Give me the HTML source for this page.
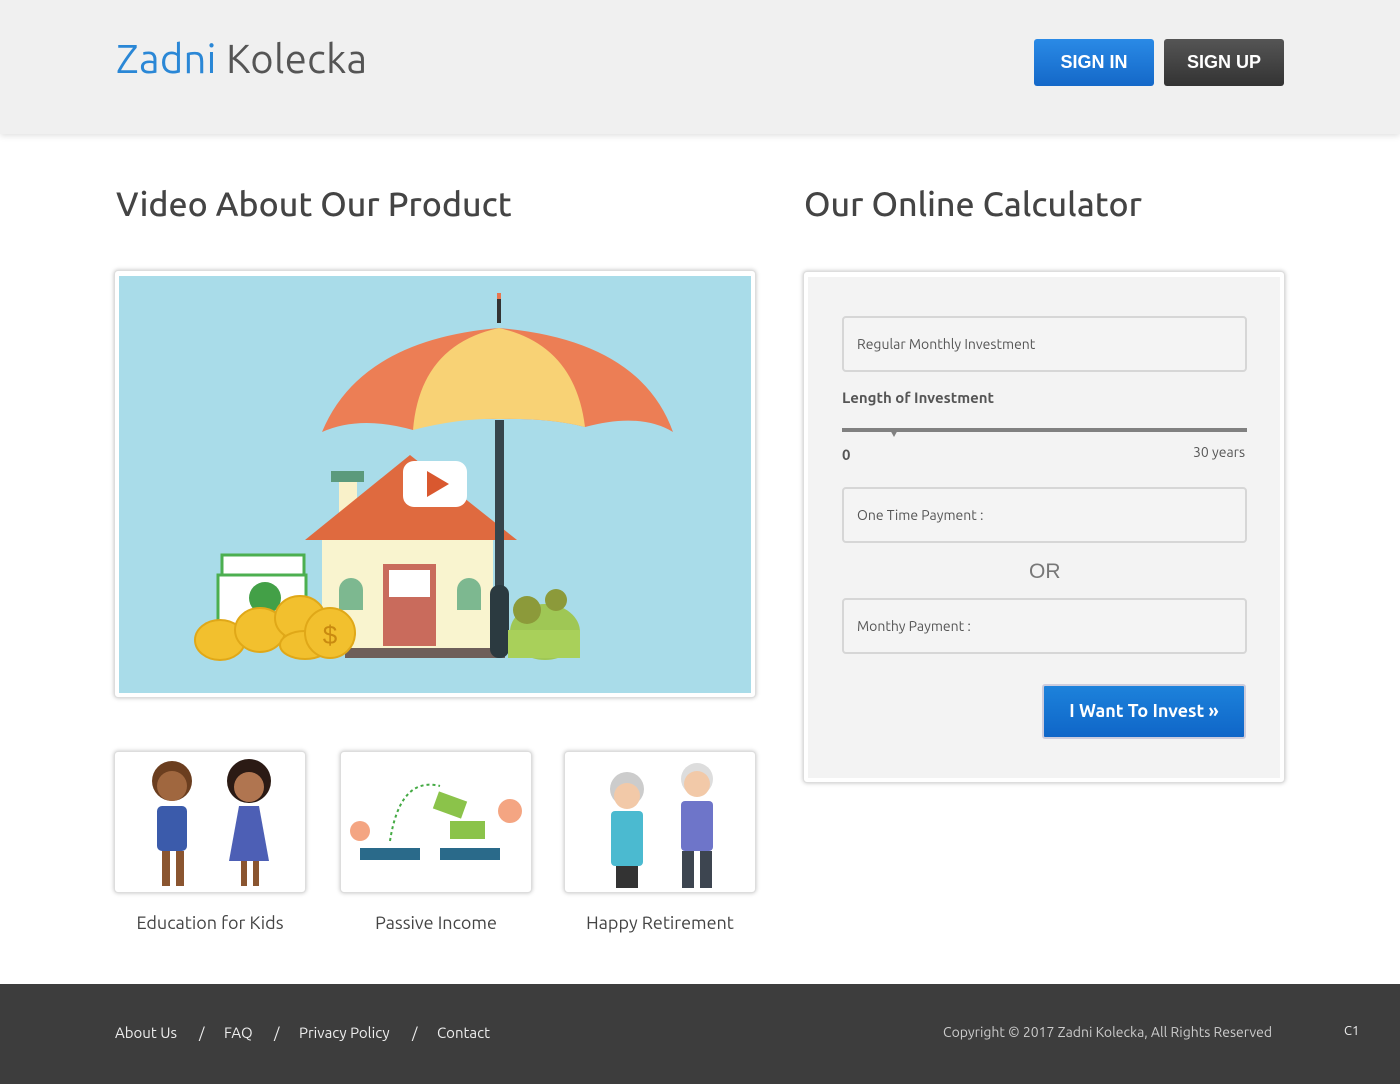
<!DOCTYPE html>
<html><head><meta charset="utf-8"><style>
*{margin:0;padding:0;box-sizing:border-box}
body{width:1400px;height:1084px;background:#fff;font-family:"Ubuntu","DejaVu Sans","Liberation Sans",sans-serif;position:relative;overflow:hidden;color:#444}
.hdr{position:absolute;left:0;top:0;width:1400px;height:134px;background:#f0f0f0;box-shadow:0 2px 6px rgba(0,0,0,.12)}
.logo{position:absolute;left:116px;top:36px;font-size:40px;color:#555;letter-spacing:.3px}
.logo b{font-weight:normal;color:#2a87d6}
.btn{position:absolute;top:39px;width:120px;height:47px;border-radius:3px;color:#fff;font:bold 18px "Liberation Sans",sans-serif;text-align:center;line-height:47px}
.h2{position:absolute;top:185px;font-size:34px;color:#444;font-weight:500}
.box{position:absolute;background:#fff;border:1px solid #ddd;border-radius:4px;box-shadow:0 0 4px rgba(0,0,0,.25)}
.inp{position:absolute;left:842px;width:405px;height:56px;border:2px solid #d6d6d6;border-radius:4px;background:#f4f4f4;font-size:14px;color:#555;padding-left:13px;line-height:52px}
.cap{position:absolute;top:913px;width:192px;text-align:center;font-size:18px;color:#444}
.ft{position:absolute;top:984px;left:0;width:1400px;height:100px;background:#3d3d3d;color:#eee;font-size:15px}
.ft span{position:absolute;top:40px}
</style></head><body>
<div class="hdr">
<div class="logo"><b>Zadni</b> Kolecka</div>
<div class="btn" style="left:1034px;background:linear-gradient(#2a8ae6,#1468c8)">SIGN IN</div>
<div class="btn" style="left:1164px;background:linear-gradient(#555,#333)">SIGN UP</div>
</div>
<div class="h2" style="left:116px">Video About Our Product</div>
<div class="h2" style="left:804px">Our Online Calculator</div>

<div class="box" style="left:114px;top:270px;width:642px;height:428px"></div>
<svg style="position:absolute;left:119px;top:276px" width="632" height="417" viewBox="119 276 632 417">
<rect x="119" y="276" width="632" height="417" fill="#a9dce9"/>
<rect x="497" y="293" width="4" height="30" fill="#333"/><rect x="497" y="293" width="4" height="6" fill="#e8764f"/>
<path d="M322 432 Q360 340 499 328 Q640 340 673 432 Q640 412 585 427 Q550 418 499 419 Q440 418 413 430 Q360 415 322 432Z" fill="#ec7e55"/>
<path d="M499 328 Q420 345 413 430 Q460 418 499 419 Q550 418 585 427 Q575 345 499 328Z" fill="#f8d275"/>
<rect x="331" y="471" width="33" height="11" fill="#5b9a7c"/>
<rect x="339" y="482" width="18" height="45" fill="#f9f1c9"/>
<path d="M305 540 L410 455 L517 540Z" fill="#df6a3f"/>
<rect x="322" y="540" width="171" height="110" fill="#f9f4cf"/>
<rect x="383" y="564" width="53" height="82" fill="#c96b5c"/><rect x="389" y="570" width="41" height="27" fill="#fff"/>
<path d="M339 610 v-20 a12 12 0 0 1 24 0 v20z" fill="#7db890"/><path d="M457 610 v-20 a12 12 0 0 1 24 0 v20z" fill="#7db890"/>
<rect x="345" y="648" width="160" height="10" fill="#6e5f5a"/>
<rect x="495" y="420" width="9" height="235" fill="#36454c"/><rect x="490" y="585" width="19" height="73" rx="9" fill="#2b3a40"/>
<ellipse cx="545" cy="632" rx="35" ry="28" fill="#9fc755"/><rect x="508" y="630" width="72" height="28" fill="#a9d05a"/>
<circle cx="527" cy="610" r="14" fill="#8c9a3a"/><circle cx="556" cy="600" r="11" fill="#8c9a3a"/>
<rect x="222" y="555" width="82" height="60" fill="#fff" stroke="#4caf50" stroke-width="3"/>
<rect x="218" y="575" width="88" height="50" fill="#fff" stroke="#4caf50" stroke-width="3"/>
<circle cx="265" cy="598" r="16" fill="#43a047"/>
<g fill="#f2c02e" stroke="#e0a818" stroke-width="2">
<ellipse cx="220" cy="640" rx="25" ry="20"/><ellipse cx="260" cy="630" rx="25" ry="22"/><ellipse cx="300" cy="618" rx="25" ry="22"/><ellipse cx="305" cy="645" rx="25" ry="14"/>
<circle cx="330" cy="633" r="25"/></g>
<text x="330" y="644" font-size="26" font-family="Liberation Sans" fill="#c98a10" text-anchor="middle">$</text>
<rect x="403" y="461" width="64" height="46" rx="11" fill="#fff"/>
<path d="M427 471 L449 484 L427 497Z" fill="#d9582f"/>
</svg>

<div class="box" style="left:803px;top:271px;width:482px;height:512px"></div>
<div style="position:absolute;left:808px;top:277px;width:472px;height:501px;background:#f3f3f3"></div>
<div class="inp" style="top:316px">Regular Monthly Investment</div>
<div style="position:absolute;left:842px;top:389px;font-size:15px;font-weight:bold;color:#555">Length of Investment</div>
<div style="position:absolute;left:842px;top:428px;width:405px;height:4px;background:#808080"></div>
<div style="position:absolute;left:889px;top:428px;width:0;height:0;border-left:5px solid transparent;border-right:5px solid transparent;border-top:9px solid #808080"></div>
<div style="position:absolute;left:842px;top:446px;font-size:15px;font-weight:bold;color:#555">0</div>
<div style="position:absolute;left:1193px;top:444px;font-size:14px;color:#555">30 years</div>
<div class="inp" style="top:487px">One Time Payment :</div>
<div style="position:absolute;left:1029px;top:560px;font:21px 'Liberation Sans',sans-serif;color:#777">OR</div>
<div class="inp" style="top:598px">Monthy Payment :</div>
<div style="position:absolute;left:1042px;top:684px;width:204px;height:55px;border:2px solid #ccd;border-radius:3px;background:linear-gradient(#1d82db,#0f66c8);color:#fff;font-size:18px;font-weight:bold;text-align:center;line-height:51px">I Want To Invest »</div>

<div class="box" style="left:114px;top:751px;width:192px;height:142px"></div>
<div class="box" style="left:340px;top:751px;width:192px;height:142px"></div>
<div class="box" style="left:564px;top:751px;width:192px;height:142px"></div>
<svg style="position:absolute;left:114px;top:751px" width="642" height="142">
<g><circle cx="58" cy="30" r="20" fill="#6b3e1f"/><circle cx="58" cy="35" r="15" fill="#a0673f"/><rect x="43" y="55" width="30" height="45" rx="5" fill="#3b5bab"/><rect x="48" y="100" width="8" height="35" fill="#8a5530"/><rect x="62" y="100" width="8" height="35" fill="#8a5530"/>
<circle cx="135" cy="30" r="22" fill="#2b1a14"/><circle cx="135" cy="36" r="15" fill="#b07550"/><path d="M115 110 L125 55 H145 L155 110Z" fill="#4d5fb5"/><rect x="127" y="110" width="6" height="25" fill="#8a5530"/><rect x="139" y="110" width="6" height="25" fill="#8a5530"/></g>
<g transform="translate(226,0)"><rect x="20" y="97" width="60" height="12" fill="#2a6a8a"/><rect x="100" y="97" width="60" height="12" fill="#2a6a8a"/><path d="M50 90 Q60 25 100 35" fill="none" stroke="#4a4" stroke-dasharray="3 3" stroke-width="2"/><rect x="95" y="45" width="30" height="18" fill="#8bc34a" transform="rotate(20 110 54)"/><rect x="110" y="70" width="35" height="18" fill="#8bc34a"/><circle cx="170" cy="60" r="12" fill="#f4a582"/><circle cx="20" cy="80" r="10" fill="#f4a582"/></g>
<g transform="translate(450,0)"><circle cx="63" cy="38" r="17" fill="#ccc"/><circle cx="63" cy="45" r="13" fill="#f2c9a8"/><rect x="47" y="60" width="32" height="55" rx="4" fill="#4bbad0"/><rect x="52" y="115" width="22" height="22" fill="#333"/>
<circle cx="133" cy="28" r="16" fill="#ddd"/><circle cx="133" cy="33" r="13" fill="#f2c9a8"/><rect x="117" y="50" width="32" height="50" rx="4" fill="#6e75c9"/><rect x="118" y="100" width="12" height="37" fill="#3d4550"/><rect x="136" y="100" width="12" height="37" fill="#3d4550"/></g>
</svg>
<div class="cap" style="left:114px">Education for Kids</div>
<div class="cap" style="left:340px">Passive Income</div>
<div class="cap" style="left:564px">Happy Retirement</div>

<div class="ft">
<span style="left:115px">About Us</span><span style="left:199px">/</span>
<span style="left:224px">FAQ</span><span style="left:274px">/</span>
<span style="left:299px">Privacy Policy</span><span style="left:412px">/</span>
<span style="left:437px">Contact</span>
<span style="left:943px;font-size:14px;color:#ccc">Copyright © 2017 Zadni Kolecka,  All Rights Reserved</span>
<span style="left:1344px;font-size:13px">C1</span>
</div>
</body></html>
